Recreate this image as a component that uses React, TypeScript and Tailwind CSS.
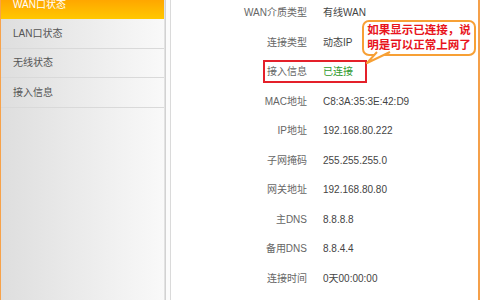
const menu = ["WAN口状态", "LAN口状态", "无线状态", "接入信息"];

const rows: { label: string; value: string; mark?: boolean }[] = [
  { label: "WAN介质类型", value: "有线WAN" },
  { label: "连接类型", value: "动态IP" },
  { label: "接入信息", value: "已连接", mark: true },
  { label: "MAC地址", value: "C8:3A:35:3E:42:D9" },
  { label: "IP地址", value: "192.168.80.222" },
  { label: "子网掩码", value: "255.255.255.0" },
  { label: "网关地址", value: "192.168.80.80" },
  { label: "主DNS", value: "8.8.8.8" },
  { label: "备用DNS", value: "8.8.4.4" },
  { label: "连接时间", value: "0天00:00:00" },
];

export default function App() {
  return (
    <div className="relative flex h-[300px] w-[480px] overflow-hidden bg-white font-['Liberation_Sans','Noto_Sans_CJK_SC',sans-serif] text-[10px]">
      {/* side menu */}
      <div className="flex w-[165px] shrink-0 flex-col border-l border-r border-l-[#f7a24a] border-r-[#e2e2e2] bg-gradient-to-r from-[#dedede] to-[#f9f9f9]">
        {menu.map((item, i) =>
          i === 0 ? (
            <div
              key={item}
              className="-mt-[10px] flex h-[29px] items-center bg-gradient-to-b from-[#ff9400] to-[#ffc800] pl-[12px] text-white"
            >
              {item}
            </div>
          ) : (
            <div
              key={item}
              className="flex h-[29.5px] items-center border-b border-[#d9d9d9] pl-[12px] text-[#555]"
            >
              {item}
            </div>
          )
        )}
      </div>
      <div className="w-[6px] shrink-0 border-x border-l-[#d2d2d2] border-r-[#dadada] bg-[#fbfbfb]" />

      {/* status table */}
      <div className="flex-1 border-r-2 border-[#f5a04a]">
        <div className="-mt-[2px]">
          {rows.map((r) =>
            r.mark ? (
              <div key={r.label} className="flex h-[29.5px] items-center">
                <div className="ml-[92px] flex h-[23px] w-[104px] items-center border-2 border-[#e4202a]">
                  <span className="w-[42px] shrink-0 text-right text-[#666]">{r.label}</span>
                  <span className="ml-[16px] text-[#2e9a2e]">{r.value}</span>
                </div>
              </div>
            ) : (
              <div key={r.label} className="flex h-[29.5px] items-center">
                <span className="w-[136px] shrink-0 text-right text-[#666]">{r.label}</span>
                <span className="ml-[16px] text-[#444]">{r.value}</span>
              </div>
            )
          )}
        </div>
      </div>

      {/* callout bubble */}
      <div className="absolute left-[362px] top-[20px] w-[114px] whitespace-nowrap rounded-[7px] border-2 border-[#f7a035] bg-white py-[1px] text-center text-[11.5px] font-bold leading-[15px] text-[#e8141c]">
        <div>如果显示已连接，说</div>
        <div>明是可以正常上网了</div>
      </div>
      <svg className="absolute left-[364px] top-[51px]" width="30" height="16" viewBox="0 0 30 16">
        <path d="M13 1 L3 12 L26 1" fill="white" stroke="#f7a035" strokeWidth="2" strokeLinejoin="round" />
      </svg>
    </div>
  );
}
